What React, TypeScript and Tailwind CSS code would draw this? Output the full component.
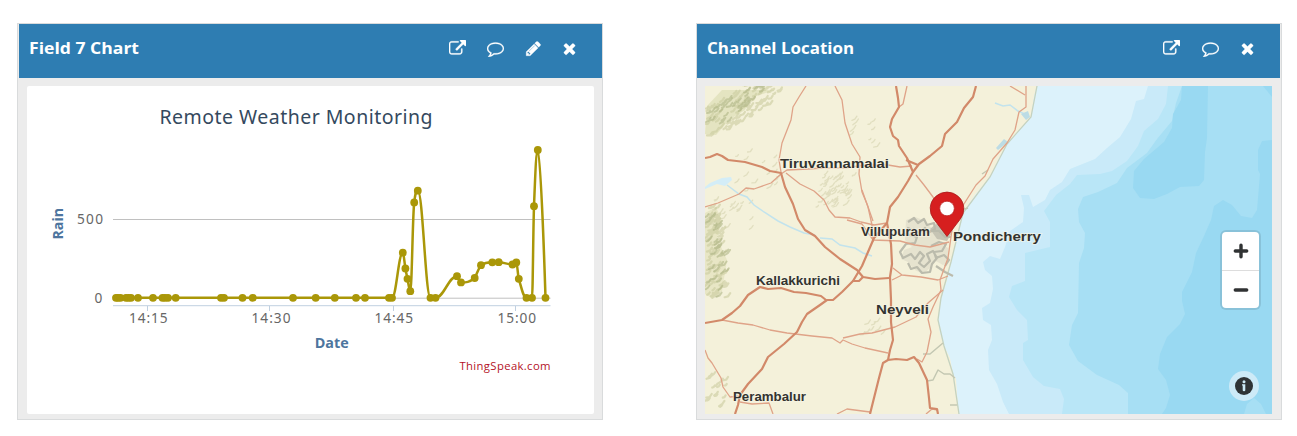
import React from "react";

type Pt = [number, number];

const ICONS = {
  external:
    "M1408 928v320q0 119-84.5 203.5t-203.5 84.5h-832q-119 0-203.5-84.5t-84.5-203.5v-832q0-119 84.5-203.5t203.5-84.5h704q14 0 23 9t9 23v64q0 14-9 23t-23 9h-704q-66 0-113 47t-47 113v832q0 66 47 113t113 47h832q66 0 113-47t47-113v-320q0-14 9-23t23-9h64q14 0 23 9t9 23zm384-864v512q0 26-19 45t-45 19-45-19l-176-176-652 652q-10 10-23 10t-23-10l-114-114q-10-10-10-23t10-23l652-652-176-176q-19-19-19-45t19-45 45-19h512q26 0 45 19t19 45z",
  comment:
    "M896 384q-204 0-381.5 69.5t-282 187.5-104.5 255q0 112 71.5 213.5t201.5 175.5l87 50-27 96q-24 91-70 172 152-63 275-171l43-38 57 6q69 8 130 8 204 0 381.5-69.5t282-187.5 104.5-255-104.5-255-282-187.5-381.5-69.5zm896 512q0 174-120 321.5t-326 233-450 85.5q-70 0-145-8-198 175-460 242-49 14-114 22h-5q-15 0-27-10.5t-16-27.5v-1q-3-4-.5-12t2-10 4.500-9.500l6-9 7-8.500 8-9q7-8 31-34.500t34.500-38 31-39.500 32.500-51 27-59 26-76q-157-89-247.500-220t-90.500-281q0-174 120-321.500t326-233 450-85.500 450 85.500 326 233 120 321.500z",
  pencil:
    "M491 1536l91-91-235-235-91 91v107h128v128h107zm523-928q0-22-22-22-10 0-17 7l-542 542q-7 7-7 17 0 22 22 22 10 0 17-7l542-542q7-7 7-17zm-54-192l416 416-832 832h-416v-416zm683 96q0 53-37 90l-166 166-416-416 166-165q36-38 90-38 53 0 91 38l235 234q37 39 37 91z",
  close:
    "M1490 1322q0 40-28 68l-136 136q-28 28-68 28t-68-28l-294-294-294 294q-28 28-68 28t-68-28l-136-136q-28-28-28-68t28-68l294-294-294-294q-28-28-28-68t28-68l136-136q28-28 68-28t68 28l294 294 294-294q28-28 68-28t68 28l136 136q28 28 28 68t-28 68l-294 294 294 294q28 28 28 68z",
};

function Icon({ name }: { name: keyof typeof ICONS }) {
  return (
    <svg viewBox="0 0 1792 1792" className="h-[17px] w-[17px] fill-white stroke-white" strokeWidth="30">
      <path d={ICONS[name]} />
    </svg>
  );
}

function splinePath(pts: Pt[]): string {
  let d = `M${pts[0][0]} ${pts[0][1]}`;
  let right: Pt = pts[0];
  for (let i = 1; i < pts.length; i++) {
    const [x, y] = pts[i];
    const [lx, ly] = pts[i - 1];
    let left: Pt = [x, y];
    let nextRight: Pt = [x, y];
    if (i < pts.length - 1) {
      const [nx, ny] = pts[i + 1];
      const leftX = (1.5 * x + lx) / 2.5;
      let leftY = (1.5 * y + ly) / 2.5;
      const rightX = (1.5 * x + nx) / 2.5;
      let rightY = (1.5 * y + ny) / 2.5;
      const corr = ((rightY - leftY) * (rightX - x)) / (rightX - leftX) + y - rightY;
      leftY += corr;
      rightY += corr;
      if (leftY > ly && leftY > y) {
        leftY = Math.max(ly, y);
        rightY = 2 * y - leftY;
      } else if (leftY < ly && leftY < y) {
        leftY = Math.min(ly, y);
        rightY = 2 * y - leftY;
      }
      if (rightY > ny && rightY > y) {
        rightY = Math.max(ny, y);
        leftY = 2 * y - rightY;
      } else if (rightY < ny && rightY < y) {
        rightY = Math.min(ny, y);
        leftY = 2 * y - rightY;
      }
      left = [leftX, leftY];
      nextRight = [rightX, rightY];
    }
    d += `C${right[0]} ${right[1]} ${left[0]} ${left[1]} ${x} ${y}`;
    right = nextRight;
  }
  return d;
}

const ZERO_X = [
  116, 118, 120.5, 126, 128.5, 131, 138, 153, 162.5, 165, 168, 175.7, 221, 224, 242.5, 252.7, 293,
  315.7, 334.8, 356, 365, 389, 392,
];
const DATA: Pt[] = [
  ...ZERO_X.map((x): Pt => [x, 297.8]),
  [402.8, 252.7], [405.4, 268.5], [407.5, 278.8], [410.3, 291.2], [414.2, 202.4], [417.8, 190.7],
  [430.5, 297.8], [435.5, 297.8], [457, 276.2], [461, 282.4], [474.7, 278], [481, 265.2],
  [492.3, 262.3], [498.7, 262.2], [512.5, 264.5], [516.3, 262.5], [518.8, 278.8],
  [526.5, 297.8], [532, 297.8], [534, 206.2], [537.8, 150], [545.5, 297.8],
];

function Chart() {
  return (
    <svg viewBox="27 86 567 328" className="block h-[328px] w-[567px] font-['Open_Sans',sans-serif]">
      <text x="159.500" y="123.700" textLength="273" fontSize="19.500" fill="#34495e" className="font-['Noto_Sans',sans-serif]">
        Remote Weather Monitoring
      </text>
      <path d="M113 219.5H550.5M113 298.2H550.5" stroke="#c0c0c0" />
      <path d="M113 305.7H550.5M147.5 306V311M269.5 306V311M393.5 306V311M515.5 306V311" stroke="#c0d0e0" fill="none" />
      <path d={splinePath(DATA)} fill="none" stroke="#aa9708" strokeWidth="2.500" strokeLinejoin="round" />
      {DATA.map(([x, y], i) => (
        <circle key={i} cx={x} cy={y} r="3.900" fill="#aa9708" />
      ))}
      <g fontSize="13.700" fill="#666" className="font-['Noto_Sans',sans-serif]">
        <text x="77" y="224" textLength="26">500</text>
        <text x="94.500" y="303">0</text>
        <text x="129" y="323" textLength="38.500">14:15</text>
        <text x="251.500" y="323" textLength="39">14:30</text>
        <text x="374.500" y="323" textLength="38.500">14:45</text>
        <text x="497.500" y="323" textLength="38.500">15:00</text>
      </g>
      <g fontSize="15" fontWeight="700" fill="#4d759e">
        <text x="314.700" y="348" textLength="34" lengthAdjust="spacingAndGlyphs">Date</text>
        <text transform="translate(63 239.5) rotate(-90)" textLength="31.500" lengthAdjust="spacingAndGlyphs">Rain</text>
      </g>
      <text x="459.500" y="370" textLength="91" fontSize="11.300" fill="#b4121f">ThingSpeak.com</text>
    </svg>
  );
}

const LAND =
  "M705 86H1037L1034 96L1031 117L1017 132L1007 144L998 160L990 177L975 195L963 213L957 238L951 262L947 280L941 298L938 320L940 333L944 346L950 358L953 374L956 379L957 395L959 414H705Z";

const MAJOR = [
  "M705 158L710 157L717 154L722 156L728 160L745 162L762 167L770 171L781 173L785 187L793 204L798 219L805 230L815 236L825 247L840 259L857 270L863 277L875 279L889 278",
  "M896 86L898 98L899 107L892 119L890 127L893 136L898 140L899 146L907 158L913 172L908 181L898 197L890 207L887 223L891 244L892 264L890 277L891 300L891 322L893 340L890 350L888 360L896 359L907 360L914 357L919 363L927 380L929 398L930 408L937 409L938 414",
  "M888 360L883 363L879 378L870 414",
  "M976 86L973 97L964 108L957 122L945 134L942 146L930 156L919 164L913 172M906 160L918 165",
  "M887 223L874 238L868 252L862 266L853 281L842 292L833 300L827 300L820 305L807 314L802 322L797 332L784 344L768 357L762 369L748 384L740 395L738 405L735 414M852 281L859 281L863 277",
  "M705 323L722 320L732 313L740 306L748 295L760 287L768 289L781 288L794 292L806 293L821 296L826 300",
];
const MINOR = [
  "M806 86L799 97L793 107L791 120L782 143L779 160L781 172",
  "M835 86L842 100L845 123L852 144L860 157L859 174L862 192L867 204L873 221",
  "M781 174L787 170L808 169L823 168L845 168L865 165L888 165L900 167L912 166",
  "M705 207L718 203L739 194L746 188L754 189L771 183L781 174",
  "M786 173L800 184L814 191L824 200L829 210L835 217L850 218L861 222L874 225L887 223",
  "M916 175L924 185L933 197L945 220",
  "M907 86L903 104L899 107",
  "M1010 86L1025 95M1026 86L1026 107L1019 112L1015 130L1007 143L993 159L985 176L976 185L962 207L952 230L948 258L940 280L941 290L933 307L928 319L931 332L927 352L922 362L917 359",
  "M847 220L862 224L873 240L900 241L915 245L930 247L949 242",
  "M862 190L868 207L872 225L873 242",
  "M893 268L902 275L921 277L938 280L948 276M892 280L902 275",
  "M943 290L928 303L916 317L895 327L872 333L860 334L843 338",
  "M722 320L738 323L753 325L770 330L787 333L812 336L832 338L840 343L843 340L852 344L865 348L888 353",
  "M705 350L708 358L712 363L721 378L723 387L730 397L740 396M740 402L752 404L769 403L773 414",
  "M837 414L847 409L870 412M926 414L932 409L938 410",
];

function hatch(seed: number, n: number, zone: (u: number, v: number) => Pt): string {
  let s = seed;
  const rnd = () => {
    s = (s * 16807) % 2147483647;
    return s / 2147483647;
  };
  let d = "";
  for (let i = 0; i < n; i++) {
    const [x, y] = zone(rnd(), rnd());
    const l = 2 + rnd() * 4;
    const k = rnd() * 0.5;
    d += `M${x.toFixed(1)} ${y.toFixed(1)}l${(l * 0.6).toFixed(1)} ${(-l * k).toFixed(1)}l${(l * 0.4).toFixed(1)} ${(-l * 0.6).toFixed(1)}`;
  }
  return d;
}

const HILLS_DARK = [
  hatch(71, 60, (u, v) => [706 + u * 60, 134 - u * 48 + (v - 0.8) * 26]),
  hatch(23, 36, (u, v) => [705 + u * 20, 215 + v * 84]),
].join("");
const HILLS_MID = [
  hatch(11, 110, (u, v) => [706 + u * 72, 133 - u * 45 + (v - 0.7) * 36]),
  hatch(37, 80, (u, v) => [705 + u * (14 + v * 6), 208 + v * 90]),
  hatch(97, 18, (u, v) => [705 + u * 20, 375 + v * 34]),
].join("");
const HILLS_LIGHT = [
  hatch(53, 55, (u, v) => [822 + u * 32 - v * 6, 172 + v * 36]),
  hatch(19, 10, (u, v) => [850 + u * 24, 120 + v * 30]),
  hatch(43, 16, (u, v) => [735 + u * 44, 150 + v * 50]),
  hatch(83, 8, (u, v) => [860 + u * 22, 322 + v * 14]),
  hatch(29, 20, (u, v) => [710 + u * 44, 200 + v * 30]),
].join("");

const LABELS: [string, number, number, number][] = [
  ["Tiruvannamalai", 780, 168, 109],
  ["Villupuram", 861, 236, 69],
  ["Pondicherry", 953, 241, 88],
  ["Kallakkurichi", 756, 285, 84],
  ["Neyveli", 876, 314, 53],
  ["Perambalur", 733, 401, 73],
];

function MapCanvas() {
  return (
    <svg viewBox="705 86 567 328" className="block h-[328px] w-[567px]">
      <rect x="705" y="86" width="567" height="328" fill="#dcf2fb" />
      <path
        fill="#c9eaf9"
        d="M1148 86L1144 99L1136 101L1131 119L1120 137L1107 148L1095 159L1070 169L1062 182L1050 190L1045 200L1033 207L1029 195L1021 195L1024 208L1023 222L1010 231L1005 247L1000 259L990 256L983 262L985 270L992 276L993 289L990 303L982 308L983 320L991 325L992 340L988 350L989 370L997 384L1003 402L1009 414H1272V86Z"
      />
      <path
        fill="#b9e6f7"
        d="M1168 86L1166 104L1158 119L1144 131L1138 146L1127 161L1112 171L1100 174L1077 175L1070 184L1056 195L1044 211L1050 222L1050 247L1025 253L1025 281L1012 286L1009 297L1017 310L1027 320L1028 340L1023 343L1023 360L1033 377L1044 386L1060 389L1064 399L1062 414H1272V86Z"
      />
      <path
        fill="#a7dff4"
        d="M1182 86L1176 103L1172 121L1157 139L1147 153L1127 168L1117 183L1098 192L1083 197L1078 209L1079 222L1085 233L1084 248L1079 263L1078 313L1072 325L1069 345L1078 361L1097 375L1119 385L1128 393V414H1272V86Z"
      />
      <path
        fill="#99d9f2"
        d="M1182 86H1208L1207 138L1205 152L1204 180L1199 186L1180 187L1167 194L1154 199L1140 198L1133 188L1134 171L1144 159L1164 142L1172 128L1173 114L1181 100Z"
      />
      <path
        fill="#99d9f2"
        d="M1272 140L1262 141L1258 150V170L1260 174L1257 210L1252 218L1241 216L1232 205L1223 200L1214 206L1211 220L1204 236L1196 253L1192 272L1182 292L1182 301L1185 314L1180 324L1167 337L1160 354L1158 369L1166 380L1170 395L1166 408L1162 414H1272ZM1263 86H1272V97Z"
      />
      <path fill="#a7dff4" d="M1244 414L1247 404L1254 398L1261 404L1266 414Z" />
      <path d={LAND} fill="#f4f1da" />
      <path d="M1037 86L1031 117L1007 144L990 177L963 213L951 262L941 298L938 320L944 346L953 374L959 414" fill="none" stroke="#c5d2bf" strokeWidth="1.300" />
      <path d="M705 134L707 106L722 90H774L751 98L745 110L730 119L716 135Z" fill="#dfdfb8" opacity=".75" />
      <path d="M705 213L716 207L722 221L717 238L727 260L722 291L712 298L705 294Z" fill="#dfdfb8" opacity=".6" />
      <g fill="none" strokeLinecap="round" strokeLinejoin="round">
        <path d={HILLS_LIGHT} stroke="#d4d2ad" strokeWidth="1.300" opacity=".6" />
        <path d={HILLS_MID} stroke="#c9cb9f" strokeWidth="2.200" opacity=".6" />
        <path d={HILLS_DARK} stroke="#aab17f" strokeWidth="1.900" opacity=".55" />
      </g>
      <path d="M705 187L710 183L722 178L731 177L732 180L725 186L717 184L705 189Z" fill="#d3edf7" />
      <path
        d="M727 185L739 194L747 197L754 205L764 212L778 221L790 227L804 233L815 235M820 238L832 239L840 245L855 248L863 253L872 256M995 103L1003 106L1010 105L1018 111L1027 115"
        fill="none"
        stroke="#c2e3ed"
        strokeWidth="1.500"
      />
      <path d="M1021 114L1028 111L1030 117L1026 120ZM996 148L1004 139L1008 142L998 150Z" fill="#bcdce5" />
      <g fill="none" strokeLinejoin="round">
        <path
          d="M923 354L930 354L943 343M927 381L933 380L938 370L944 374L950 374L955 378M950 405H957M982 174L988 170M961 210L968 208"
          stroke="#c3c7b2"
          strokeWidth="1.500"
        />
        <path
          d="M906 220L915 217L923 220L929 226L937 232L941 244L948 248L949 261L943 265L934 260L931 267L923 274L915 270L908 262L901 259L904 250L912 247L905 240Z"
          fill="#e6e3cf"
        />
        <path d="M930 229L936 224L946 226L953 231L947 241L937 239Z" fill="#c6c4b4" />
        <path
          d="M908 222l6-4 4 5 6-4 3 6 7-2 1 6-7 4-3-5-6 5-5-4-4 6 7 2-2 6-9 1-6 8 3 6 8-4 4 5 5-7 4 4-5 7 5 4 6-6-3-7 6-3 4 7-5 6-2 8-8 1-5-6-6 2-3-6M931 246l8-4 7 2-4 7-8 1 2 6 8-3 5 5-4 6M936 266l9 6 8 4M930 231l9 0 6 6 6 0M914 231l-6-3-2 8"
          stroke="#bbbbac"
          strokeWidth="2.200"
        />
        {MINOR.map((d) => (
          <path key={d} d={d} stroke="#dfa388" strokeWidth="1.300" />
        ))}
        {MAJOR.map((d) => (
          <path key={d} d={d} stroke="#d28969" strokeWidth="2.200" />
        ))}
      </g>
      <g
        fontSize="13.300"
        fontWeight="700"
        fill="#333330"
        stroke="#f7f5e6"
        strokeOpacity=".65"
        strokeWidth="2"
        paintOrder="stroke"
        className="font-['Liberation_Sans',Arial,sans-serif]"
      >
        {LABELS.map(([name, x, y, w]) => (
          <text key={name} x={x} y={y} textLength={w} lengthAdjust="spacingAndGlyphs">
            {name}
          </text>
        ))}
      </g>
      <path d="M947 236.500L934 219.500A16.800 16.800 0 1 1 960 219.500Z" fill="#d61f1f" stroke="#a81c1c" strokeWidth=".8" />
      <circle cx="947" cy="208.500" r="7.300" fill="#fff" stroke="#b81c1c" strokeWidth=".7" />
    </svg>
  );
}

function Panel({
  title,
  icons,
  headerClass,
  children,
}: {
  title: React.ReactNode;
  icons: React.ReactNode;
  headerClass: string;
  children: React.ReactNode;
}) {
  return (
    <section className="flex h-[397px] w-[586px] flex-col border border-[#d9dbdc] bg-[#ececec]">
      <header className={`flex h-[54px] shrink-0 items-start justify-between bg-[#2e7db2] ${headerClass}`}>
        {title}
        <div className="flex pt-4">{icons}</div>
      </header>
      <div className="mt-2 ml-2">{children}</div>
    </section>
  );
}

function Title({ text, width }: { text: string; width: number }) {
  return (
    <h2 className="pt-3">
      <svg width={width + 2} height="24" className="block overflow-visible font-['Open_Sans','Trebuchet_MS',sans-serif]">
        <text x="0" y="18" textLength={width} lengthAdjust="spacingAndGlyphs" fontSize="16.500" fontWeight="700" fill="#fff">
          {text}
        </text>
      </svg>
    </h2>
  );
}

export default function App() {
  return (
    <main className="flex h-[436px] w-[1297px] items-start gap-[93px] overflow-hidden bg-white pt-[23px] pl-[17px]">
      <Panel
        headerClass="ml-px pl-[10px] pr-[24px]"
        title={<Title text="Field 7 Chart" width={110} />}
        icons={
          <div className="flex gap-[21.500px]">
            <Icon name="external" />
            <Icon name="comment" />
            <div className="-ml-px">
              <Icon name="pencil" />
            </div>
            <div className="-ml-[2px]">
              <Icon name="close" />
            </div>
          </div>
        }
      >
        <div className="ml-px w-[567px] rounded-[2px] bg-white">
          <Chart />
        </div>
      </Panel>
      <Panel
        headerClass="mr-px pl-[10px] pr-[24px]"
        title={<Title text="Channel Location" width={147} />}
        icons={
          <div className="flex gap-[21.500px]">
            <Icon name="external" />
            <Icon name="comment" />
            <div className="-ml-px">
              <Icon name="close" />
            </div>
          </div>
        }
      >
        <div className="relative h-[328px] w-[567px]">
          <MapCanvas />
          <div className="absolute top-[146px] right-[13px] flex w-[37px] flex-col rounded-[4px] bg-white shadow-[0_0_0_2px_rgba(0,0,0,0.1)]">
            <button aria-label="Zoom in" className="flex h-[39px] items-center justify-center border-b border-[#ddd]">
              <svg viewBox="0 0 16 16" className="h-4 w-4" stroke="#303233" strokeWidth="3.400" strokeLinecap="round">
                <path d="M8 2.300V13.700M2.300 8H13.700" />
              </svg>
            </button>
            <button aria-label="Zoom out" className="flex h-[37px] items-center justify-center">
              <svg viewBox="0 0 16 16" className="h-4 w-4" stroke="#303233" strokeWidth="3.400" strokeLinecap="round">
                <path d="M2.300 8H13.700" />
              </svg>
            </button>
          </div>
          <button
            aria-label="Attribution"
            className="absolute right-[13px] bottom-[13px] flex h-[30px] w-[30px] items-center justify-center rounded-full bg-[#cdeaf7]"
          >
            <svg viewBox="0 0 20 20" className="h-5 w-5">
              <circle cx="10" cy="10" r="9" fill="#2f3335" />
              <circle cx="10" cy="5.800" r="1.500" fill="#cdeaf7" />
              <path d="M8 8.300H11.300V14.300Q11.300 15.300 10 15.300T8.700 14.300V9.500H8Z" fill="#cdeaf7" />
            </svg>
          </button>
        </div>
      </Panel>
    </main>
  );
}
